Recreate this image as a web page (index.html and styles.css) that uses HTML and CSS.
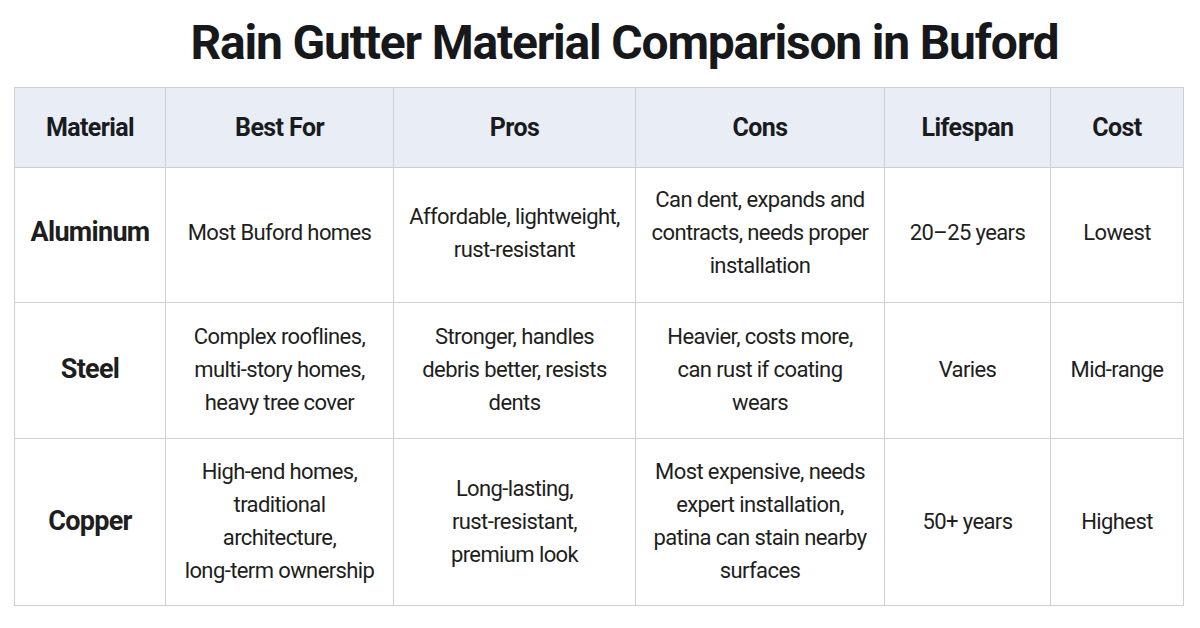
FILE: index.html
```html
<!DOCTYPE html>
<html>
<head>
<meta charset="utf-8">
<link rel="stylesheet" href="styles.css">
</head>
<body>
<div class="page">
  <h1 class="title">Rain Gutter Material Comparison in Buford</h1>
  <table class="cmp">
    <colgroup>
      <col class="c1"><col class="c2"><col class="c3"><col class="c4"><col class="c5"><col class="c6">
    </colgroup>
    <thead>
      <tr class="head">
        <th>Material</th><th>Best For</th><th>Pros</th><th>Cons</th><th>Lifespan</th><th>Cost</th>
      </tr>
    </thead>
    <tbody>
      <tr class="r1">
        <td class="mat">Aluminum</td>
        <td>Most Buford homes</td>
        <td>Affordable, lightweight,<br>rust-resistant</td>
        <td>Can dent, expands and<br>contracts, needs proper<br>installation</td>
        <td>20–25 years</td>
        <td>Lowest</td>
      </tr>
      <tr class="r2">
        <td class="mat">Steel</td>
        <td>Complex rooflines,<br>multi-story homes,<br>heavy tree cover</td>
        <td>Stronger, handles<br>debris better, resists<br>dents</td>
        <td>Heavier, costs more,<br>can rust if coating<br>wears</td>
        <td>Varies</td>
        <td>Mid-range</td>
      </tr>
      <tr class="r3">
        <td class="mat">Copper</td>
        <td>High-end homes,<br>traditional<br>architecture,<br>long-term ownership</td>
        <td>Long-lasting,<br>rust-resistant,<br>premium look</td>
        <td>Most expensive, needs<br>expert installation,<br>patina can stain nearby<br>surfaces</td>
        <td>50+ years</td>
        <td>Highest</td>
      </tr>
    </tbody>
  </table>
</div>
</body>
</html>
```
FILE: styles.css
```css
html, body {
  margin: 0;
  padding: 0;
  background: #ffffff;
}
.page {
  width: 1200px;
  height: 628px;
  padding: 0 17px 0 14px;
  box-sizing: border-box;
  font-family: "Roboto", "Liberation Sans", sans-serif;
  color: #1c1c1e;
}
.title {
  margin: 0;
  padding: 16px 0 0 52px;
  height: 70px;
  box-sizing: border-box;
  text-align: center;
  font-size: 48px;
  font-weight: 700;
  letter-spacing: -1.2px;
  color: #17181b;
  line-height: 54px;
}
.cmp {
  margin-top: 17px;
  width: 1169px;
  border-collapse: collapse;
  table-layout: fixed;
}
.c1 { width: 151px; }
.c2 { width: 228px; }
.c3 { width: 242px; }
.c4 { width: 249px; }
.c5 { width: 166px; }
.c6 { width: 133px; }
.cmp th, .cmp td {
  border: 1.5px solid #cfcfd2;
  text-align: center;
  vertical-align: middle;
  padding: 0 2px;
  font-size: 22px;
  line-height: 33px;
  letter-spacing: -0.6px;
}
.cmp th {
  background: #e9eef6;
  font-weight: 700;
  height: 79px;
  font-size: 25px;
  color: #1a1b1e;
}
.r1 td { height: 129px; padding-bottom: 5px; }
.r2 td { height: 133px; padding-bottom: 2px; }
.r3 td { height: 164px; padding-bottom: 2px; }
.cmp td { font-weight: 400; color: #1e1e20; }
.cmp td.mat { font-weight: 700; font-size: 27px; letter-spacing: -0.7px; }
```
